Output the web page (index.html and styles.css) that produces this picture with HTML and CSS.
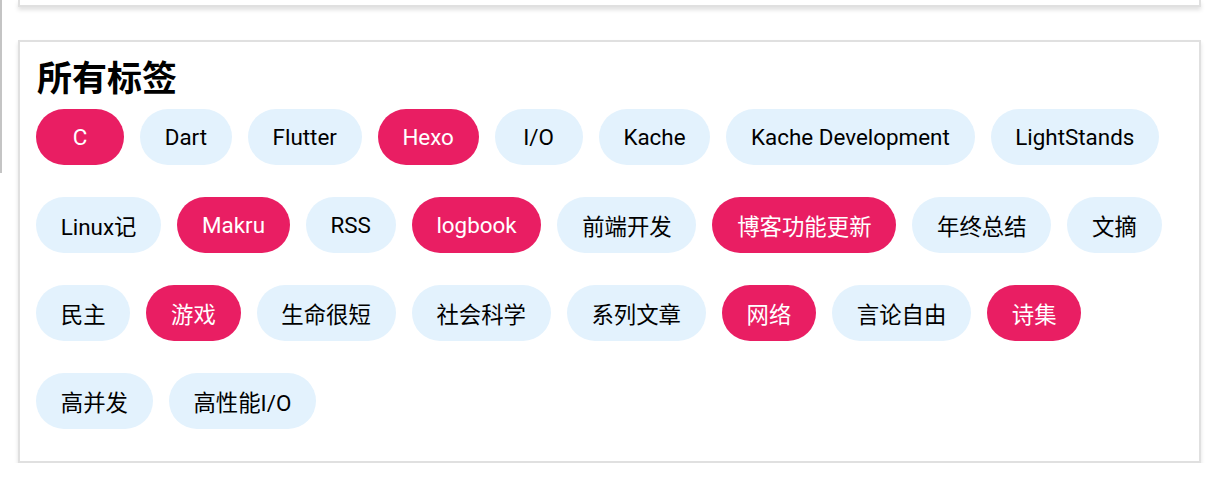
FILE: index.html
```html
<!DOCTYPE html>
<html lang="zh">
<head>
<meta charset="utf-8">
<title>所有标签</title>
<link rel="stylesheet" href="styles.css">
</head>
<body>
<div class="page">
  <div class="side-rule"></div>
  <main class="content">
    <div class="card card-prev"></div>
    <section class="card card-tags">
      <h2 class="title">所有标签</h2>
      <div class="tags">
        <a class="tag tag-hot">C</a>
        <a class="tag">Dart</a>
        <a class="tag">Flutter</a>
        <a class="tag tag-hot">Hexo</a>
        <a class="tag">I/O</a>
        <a class="tag">Kache</a>
        <a class="tag">Kache Development</a>
        <a class="tag">LightStands</a>
        <a class="tag">Linux记</a>
        <a class="tag tag-hot">Makru</a>
        <a class="tag">RSS</a>
        <a class="tag tag-hot">logbook</a>
        <a class="tag">前端开发</a>
        <a class="tag tag-hot">博客功能更新</a>
        <a class="tag">年终总结</a>
        <a class="tag">文摘</a>
        <a class="tag">民主</a>
        <a class="tag tag-hot">游戏</a>
        <a class="tag">生命很短</a>
        <a class="tag">社会科学</a>
        <a class="tag">系列文章</a>
        <a class="tag tag-hot">网络</a>
        <a class="tag">言论自由</a>
        <a class="tag tag-hot">诗集</a>
        <a class="tag">高并发</a>
        <a class="tag">高性能I/O</a>
      </div>
    </section>
  </main>
</div>
</body>
</html>
```

FILE: styles.css
```css
html, body {
  margin: 0;
  padding: 0;
  background: #ffffff;
}

body {
  font-family: Roboto, "Noto Sans CJK SC", "Noto Sans", sans-serif;
  color: #000;
}

.page {
  display: flex;
  align-items: flex-start;
}

.side-rule {
  flex: 0 0 auto;
  width: 2px;
  height: 173px;
  background: #c4c4c4;
}

.content {
  flex: 0 0 auto;
  width: 1183px;
  margin-left: 16px;
  display: flex;
  flex-direction: column;
}

.card {
  background: #fff;
  border: 2px solid #e0e0e0;
  box-shadow: 0 3px 4px rgba(0, 0, 0, 0.12);
  box-sizing: border-box;
}

.card-prev {
  height: 7px;
  border-top: none;
}

.card-tags {
  margin-top: 33px;
  padding: 14px 16px 32px 16px;
}

.title {
  margin: 0 0 13px 1px;
  font-family: "Noto Sans CJK SC", sans-serif;
  font-size: 35px;
  font-weight: 700;
  line-height: 40px;
}

.tags {
  display: flex;
  flex-wrap: wrap;
  column-gap: 16px;
  row-gap: 32px;
}

.tag {
  display: inline-flex;
  align-items: center;
  justify-content: center;
  height: 56px;
  min-width: 88px;
  padding: 0 24.75px;
  box-sizing: border-box;
  border-radius: 28px;
  background: #e3f2fd;
  color: #000;
  font-size: 22.4px;
  text-decoration: none;
  white-space: nowrap;
}

.tag-hot {
  background: #e91e63;
  color: #fff;
}
```
